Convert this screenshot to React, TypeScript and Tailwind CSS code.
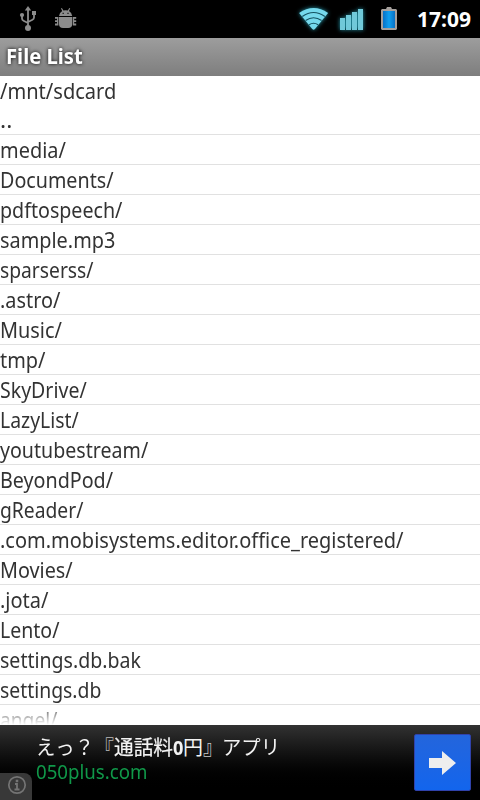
import { useLayoutEffect, useRef } from "react";

type FitProps = { text: string; width: number; className?: string };

// One line of text, condensed or widened horizontally to a given advance width.
function FitText({ text, width, className = "" }: FitProps) {
  const ref = useRef<HTMLSpanElement>(null);
  useLayoutEffect(() => {
    const el = ref.current;
    if (el) el.style.transform = `scaleX(${width / el.offsetWidth})`;
  }, [text, width]);
  return (
    <span ref={ref} className={`inline-block origin-left whitespace-pre ${className}`}>
      {text}
    </span>
  );
}

const files: [string, number][] = [
  ["..", 12],
  ["media/", 65.5],
  ["Documents/", 113.5],
  ["pdftospeech/", 122.5],
  ["sample.mp3", 115.5],
  ["sparserss/", 93.5],
  [".astro/", 60.5],
  ["Music/", 61.5],
  ["tmp/", 45.5],
  ["SkyDrive/", 86.5],
  ["LazyList/", 78.5],
  ["youtubestream/", 148.5],
  ["BeyondPod/", 113.5],
  ["gReader/", 83.5],
  [".com.mobisystems.editor.office_registered/", 403.5],
  ["Movies/", 72.5],
  [".jota/", 48.5],
  ["Lento/", 59.5],
  ["settings.db.bak", 140.5],
  ["settings.db", 101.5],
  ["angel/", 57.5],
];

function UsbIcon() {
  return (
    <svg width="18" height="26" viewBox="0 0 18 26" className="ml-[19px] mt-[6px]" fill="#8c8c8c" stroke="#8c8c8c">
      <path d="M9 0l3.200 4.500H5.800z" stroke="none" />
      <path d="M9 4v19M3 9v3.500q0 1.500 1.500 2.200L9 17M15 7v4.500q0 1.500-1.500 2.200L9 16" fill="none" strokeWidth="1.800" />
      <circle cx="9" cy="22" r="3" stroke="none" />
      <circle cx="3" cy="9" r="2.100" stroke="none" />
      <path d="M13 5h4v4h-4z" stroke="none" />
    </svg>
  );
}

function DebugIcon() {
  return (
    <svg width="22" height="22" viewBox="0 0 22 22" className="ml-[18px] mt-[7px]" fill="#8c8c8c">
      <path d="M4 9a6.500 6.500 0 0 1 3.200-5L6 1.500l.9-.5 1.500 2.500q2.200-.7 4.400 0L14.300 1l.9.500L14 4a6.500 6.500 0 0 1 3.200 5z" />
      <path d="M4 10h13.200v7q0 4-4 4H8q-4 0-4-4z" />
      <path d="M0 10h3.400v8.400H0v-1.900h2v-1.400H0v-1.800h2v-1.500H0zM21.200 10h-3.400v8.400h3.400v-1.900h-2v-1.400h2v-1.800h-2v-1.500h2z" />
      <path d="M7.500 5.700h1.400V7H7.500zM12.300 5.700h1.400V7h-1.400z" fill="#222" />
    </svg>
  );
}

function WifiIcon() {
  return (
    <svg width="34" height="28" viewBox="0 0 34 28" className="ml-[219px] mt-[4px] drop-shadow-[0_0_2px_#2596aa]">
      <g transform="translate(.6 0)">
        <path d="M2.500 9Q17-1 31.500 9L18.300 25q-1.300 1.500-2.600 0z" fill="#76d9ec" />
        <path d="M5.700 12.500q11.300-8 22.600 0M9 16.500q8-5.500 16 0M12.500 20.700q4.500-3 9 0" fill="none" stroke="#155260" strokeWidth="1.100" />
      </g>
    </svg>
  );
}

function SignalIcon() {
  return (
    <svg width="25" height="24" viewBox="0 0 25 24" className="ml-[9px] mt-[8px] drop-shadow-[0_0_2px_#2596aa]" fill="#70c9d9">
      <path d="M1 10h5v12H1zM7 7h5v15H7zM13 4h5v18h-5zM19 1h5v21h-5z" />
    </svg>
  );
}

function BatteryIcon() {
  return (
    <svg width="16" height="24" viewBox="0 0 16 24" className="ml-[17px] mt-[7px]">
      <defs>
        <linearGradient id="charge">
          <stop offset="0" stopColor="#0870c5" />
          <stop offset=".5" stopColor="#10a0f0" />
          <stop offset="1" stopColor="#0870c5" />
        </linearGradient>
      </defs>
      <path d="M6 0h4l1 2h4l1 1v19l-1 1H1l-1-1V3l1-1h4z" fill="#a5a09c" />
      <path d="M2 4h12v17H2z" fill="url(#charge)" />
    </svg>
  );
}

export default function App() {
  return (
    <div className="flex h-[800px] w-[480px] flex-col overflow-hidden bg-white font-['Noto_Sans','Noto_Sans_CJK_JP',sans-serif] text-[21px] text-[#333] [font-variant-ligatures:none]">
      <header className="flex h-[38px] shrink-0 items-start bg-black">
        <UsbIcon />
        <DebugIcon />
        <WifiIcon />
        <SignalIcon />
        <BatteryIcon />
        <div className="ml-[20px] h-[38px] leading-[39px] font-bold text-white">
          <FitText text="17:09" width={54} />
        </div>
      </header>
      <div className="h-[38px] shrink-0 bg-linear-to-b from-[#9d9d9d] to-[#7e7e7e] pl-[6px] leading-[37px] font-bold text-white [text-shadow:0_0_4px_#000]">
        <FitText text="File List" width={77} />
      </div>
      <main className="relative h-[649px] shrink-0 overflow-hidden">
        <div className="h-[29px] leading-[30px]">
          <FitText text="/mnt/sdcard" width={116.5} />
        </div>
        <ul>
          {files.map(([name, width]) => (
            <li key={name} className="h-[30px] border-b border-[#e1e1e1] leading-[30px]">
              <FitText text={name} width={width} />
            </li>
          ))}
        </ul>
        <div className="absolute inset-x-0 bottom-0 h-[18px] bg-linear-to-b from-white/20 to-white" />
      </main>
      <footer className="relative flex h-[75px] shrink-0 bg-linear-to-b from-[#323232] to-black to-90%">
        <div className="flex-1 pl-[36px] pt-[9px]">
          <div className="flex h-[27px] text-[20px] leading-[28px] whitespace-pre text-[#f3f3f3]">
            <div className="w-[68px]">
              <FitText text="えっ？" width={58} />
            </div>
            <div className="w-[10px] text-[#bbb] [font-feature-settings:'halt']">『</div>
            <div className="w-[59px] [-webkit-text-stroke:0.2px_#f3f3f3]">
              <FitText text="通話料" width={59} />
            </div>
            <div className="w-[10px] font-bold">
              <FitText text="0" width={10} />
            </div>
            <div className="w-[20px]">円</div>
            <div className="w-[19px] text-[#ccc] [font-feature-settings:'halt']">』</div>
            <FitText text="アプリ" width={58} />
          </div>
          <div className="text-[19px] leading-[23px] text-[#109849]">
            <FitText text="050plus.com" width={112} />
          </div>
        </div>
        <div className="mt-[9px] mr-[9px] flex h-[57px] w-[57px] items-center justify-center rounded-[2px] border border-[#3042aa] bg-linear-to-b from-[#2365dc] to-[#1265ed]">
          <svg width="27" height="24" viewBox="0 0 27 24" fill="#eee">
            <path d="M0 7h13V0l14 12-14 12v-7H0z" />
          </svg>
        </div>
        <div className="absolute bottom-0 left-0 h-[27px] w-[32px] rounded-tr-[8px] bg-[#383838]">
          <svg width="20" height="20" viewBox="0 0 20 20" className="ml-[7px] mt-[2px]" fill="none" stroke="#747474">
            <circle cx="10" cy="10" r="8.200" strokeWidth="1.700" />
            <path d="M10 4.700v2.500" strokeWidth="2.500" />
            <path d="M8 9h2v5.500M7.500 14.500h5" strokeWidth="1.800" />
          </svg>
        </div>
      </footer>
    </div>
  );
}
